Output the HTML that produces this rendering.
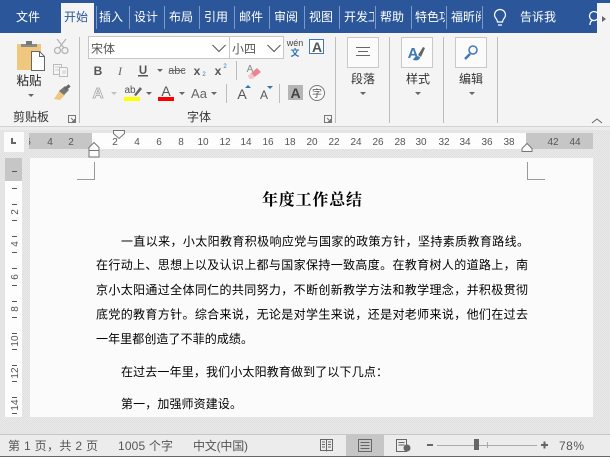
<!DOCTYPE html>
<html lang="zh"><head><meta charset="utf-8"><title>Word</title>
<style>
html,body{margin:0;padding:0;width:610px;height:457px;overflow:hidden;background:#e6e6e6}
svg{display:block}
text{font-family:"Liberation Sans","Noto Sans CJK SC",sans-serif}
.t{font-size:12px;fill:#fff;text-anchor:middle}
.l{font-size:12px;fill:#333;text-anchor:middle}
.r{font-size:10px;fill:#555;text-anchor:middle;font-family:"Liberation Sans",sans-serif}
.b{font-size:12px;fill:#000;font-family:"WenQuanYi Zen Hei","Noto Sans CJK SC",sans-serif}
.s{font-size:12px;fill:#555}
.sep{stroke:#bdbdbd;stroke-width:1}
.ic{font-weight:bold;fill:#555;text-anchor:middle;font-family:"Liberation Sans",sans-serif}
</style></head><body>
<svg width="610" height="457" viewBox="0 0 610 457" xmlns="http://www.w3.org/2000/svg">
<defs>
<pattern id="dit" width="2" height="2" patternUnits="userSpaceOnUse"><rect width="2" height="2" fill="#e8e8e8"/><rect width="1" height="1" fill="#e1e1e1"/><rect x="1" y="1" width="1" height="1" fill="#e1e1e1"/></pattern>
</defs>
<rect width="610" height="457" fill="url(#dit)"/>
<!-- title/tabs -->
<rect width="610" height="33" fill="#2b579a"/>
<rect x="61" y="3" width="33" height="30" fill="#f4f4f4"/>
<text class="t" x="28" y="21">文件</text>
<text class="l" x="76" y="21" style="fill:#2b579a">开始</text>
<text class="t" x="111" y="21">插入</text>
<text class="t" x="146" y="21">设计</text>
<text class="t" x="181" y="21">布局</text>
<text class="t" x="216" y="21">引用</text>
<text class="t" x="251" y="21">邮件</text>
<text class="t" x="286" y="21">审阅</text>
<text class="t" x="321" y="21">视图</text>
<svg x="343" y="0" width="31" height="33"><text class="t" x="19" y="21">开发工</text></svg>
<text class="t" x="392" y="21">帮助</text>
<svg x="415" y="0" width="30" height="33"><text class="t" x="18" y="21">特色功</text></svg>
<svg x="451" y="0" width="30" height="33"><text class="t" x="18" y="21">福昕阅</text></svg>
<g stroke="#7d9bc6" stroke-width="1">
<path d="M96.500 6V29M129.500 6V29M164.500 6V29M199.500 6V29M234.500 6V29M269.500 6V29M304.500 6V29M339.500 6V29M375.500 6V29M411.500 6V29M446.500 6V29M482.500 6V29"/>
</g>
<!-- bulb -->
<g fill="none" stroke="#fff" stroke-width="1.200"><path d="M497.500 22c0-3-3-4-3-7a5.500 5.500 0 0 1 11 0c0 3-3 4-3 7z"/><path d="M498 25h4"/></g>
<text class="t" x="538" y="21">告诉我</text>
<g fill="none" stroke="#fff" stroke-width="1.300"><circle cx="594" cy="16" r="4.500"/><path d="M590 25c0-3 1-4 3-5"/></g>
<rect x="597" y="3" width="13" height="30" fill="#f4f4f4"/>
<path d="M602 16l4 3-4 3z" fill="#666"/>
<!-- ribbon -->
<rect y="33" width="610" height="94" fill="#f4f4f4"/>
<rect y="126" width="610" height="1" fill="#d2d2d2"/>
<rect y="127" width="610" height="3" fill="#ececec"/>
<path class="sep" d="M79.500 37V123M335.500 37V123M389.500 37V123M443.500 37V123M497.500 37V123"/>
<!-- clipboard -->
<path d="M17 44h24v26H17z" fill="#efc77f"/>
<path d="M21 44h16v3H21z" fill="#8a8a8a"/><rect x="26" y="41" width="6" height="4" fill="#777"/>
<path d="M31.500 51.500h8l5 5v14h-13z" fill="#fff" stroke="#666"/>
<path d="M39.500 51.500v5h5" fill="none" stroke="#666"/>
<text x="29" y="85" style="font-size:12.500px;fill:#222;text-anchor:middle">粘贴</text>
<path d="M28 94h6l-3 3z" fill="#666"/>
<text x="31" y="121" style="font-size:12px;fill:#333;text-anchor:middle">剪贴板</text>
<g fill="none" stroke="#777"><rect x="68.500" y="115.500" width="7" height="7"/><path d="M71 118l3.500 3.500M74.500 119v2.500H72"/></g>
<!-- scissors -->
<g fill="none" stroke="#b5b5b5" stroke-width="1.300"><circle cx="57.500" cy="50.500" r="3"/><circle cx="65" cy="50.500" r="3"/><path d="M59 48l7-9M64 48l-7-9"/></g>
<!-- copy -->
<g fill="#f6f6f6" stroke="#bbb"><path d="M53.500 64.500h8v10h-8z"/><path d="M60.500 67.500h6l1 1v8h-8v-9z"/></g>
<path d="M55 67h5M55 70h4M62 71h4M62 73h4" stroke="#ccc"/>
<!-- painter -->
<path d="M60 90l5 5-5 5-6-1z" fill="#efc77f"/>
<path d="M59 91l6-5 4 4-5 5" fill="#777"/><rect x="64" y="86" width="6" height="3" fill="#666" transform="rotate(-40 67 87)"/>
<!-- font boxes -->
<rect x="88.500" y="36.500" width="141" height="22" fill="#fff" stroke="#c6c6c6"/>
<rect x="229.500" y="36.500" width="54" height="22" fill="#fff" stroke="#c6c6c6"/>
<text x="91" y="53" style="font-size:12px;fill:#555">宋体</text>
<text x="232" y="53" style="font-size:12px;fill:#555">小四</text>
<path d="M212.500 45l6.500 6.500 6.500-6.500M267.500 45l6.500 6.500 6.500-6.500" fill="none" stroke="#555"/>
<text x="295" y="46" style="font-size:9px;fill:#444;text-anchor:middle">wén</text>
<text x="295" y="56" style="font-size:9px;fill:#2f75b5;text-anchor:middle;font-weight:bold">文</text>
<rect x="309.500" y="39.500" width="14" height="14" fill="#fff" stroke="#3f78b5"/>
<text class="ic" x="317" y="52" style="font-size:14px">A</text>
<!-- row 2 -->
<text class="ic" x="98" y="75" style="font-size:12px">B</text>
<text x="120" y="75" style="font-size:12px;fill:#666;text-anchor:middle;font-style:italic;font-family:'Liberation Serif',serif">I</text>
<text class="ic" x="143" y="74" style="font-size:11.500px">U</text><rect x="138" y="75" width="10" height="1.500" fill="#555"/>
<path d="M157 69h6l-3 3z" fill="#666"/>
<text x="177" y="74" style="font-size:11px;fill:#666;text-anchor:middle;font-family:'Liberation Sans',sans-serif">abc</text><rect x="169" y="70" width="16" height="1" fill="#666"/>
<text class="ic" x="197" y="75" style="font-size:12px">x</text><text x="204" y="76" style="font-size:6px;fill:#2f75b5;text-anchor:middle;font-family:'Liberation Sans',sans-serif">2</text>
<text class="ic" x="218" y="75" style="font-size:12px">x</text><text x="225" y="68" style="font-size:6px;fill:#2f75b5;text-anchor:middle;font-family:'Liberation Sans',sans-serif">2</text>
<path class="sep" d="M236.500 61V80"/>
<text x="250" y="72" style="font-size:10px;fill:#888;text-anchor:middle;font-family:'Liberation Sans',sans-serif">A</text>
<path d="M248 76l9-8 4 4-9 7h-2z" fill="#e9858f"/><path d="M248 76l3-3 4 4-3 2h-2z" fill="#f4c6ca"/>
<!-- row 3 -->
<text x="98" y="98" style="font-size:15px;fill:#f4f4f4;stroke:#a8a8a8;stroke-width:.8;text-anchor:middle;font-weight:bold;font-family:'Liberation Sans',sans-serif">A</text>
<path d="M111 92h6l-3 3z" fill="#c0c0c0"/>
<text x="130" y="93" style="font-size:10px;fill:#555;text-anchor:middle;font-family:'Liberation Sans',sans-serif">ab</text>
<path d="M134 95l6-8 2 2-6 7z" fill="#666"/>
<rect x="124" y="97" width="16" height="4" fill="#ffff00"/>
<path d="M146 92h6l-3 3z" fill="#666"/>
<text class="ic" x="166" y="96" style="font-size:14px;font-weight:normal">A</text>
<rect x="158" y="97" width="16" height="4" fill="#ff0000"/>
<path d="M179 92h6l-3 3z" fill="#666"/>
<text x="199" y="98" style="font-size:13px;fill:#666;text-anchor:middle;font-family:'Liberation Sans',sans-serif">Aa</text>
<path d="M211 92h6l-3 3z" fill="#666"/>
<path class="sep" d="M226.500 84V103"/>
<text x="242" y="99" style="font-size:14px;fill:#555;text-anchor:middle;font-family:'Liberation Sans',sans-serif">A</text><path d="M245 88h6l-3-3z" fill="#2f75b5"/>
<text x="264" y="99" style="font-size:12px;fill:#555;text-anchor:middle;font-family:'Liberation Sans',sans-serif">A</text><path d="M267 86h6l-3 3z" fill="#2f75b5"/>
<path class="sep" d="M279.500 84V103"/>
<rect x="288" y="85" width="15" height="15" fill="#b5b5b5"/>
<text class="ic" x="295.500" y="98" style="font-size:14px;fill:#444">A</text>
<circle cx="317" cy="93" r="7.500" fill="#fbfbfb" stroke="#777"/>
<text x="317" y="97" style="font-size:10px;fill:#555;text-anchor:middle">字</text>
<text x="199" y="121" style="font-size:12px;fill:#333;text-anchor:middle">字体</text>
<g fill="none" stroke="#777"><rect x="324.500" y="115.500" width="7" height="7"/><path d="M327 118l3.500 3.500M330.500 119v2.500H328"/></g>
<!-- big buttons -->
<g fill="#fbfbfb" stroke="#c9c9c9"><rect x="347.500" y="37.500" width="31" height="30"/><rect x="401.500" y="37.500" width="31" height="30"/><rect x="455.500" y="37.500" width="31" height="30"/></g>
<path d="M356 47.500h14M358 51.500h10M356 55.500h14" stroke="#666" fill="none"/>
<text x="413" y="58" style="font-size:15px;fill:#3f78b5;text-anchor:middle;font-weight:bold;font-family:'Liberation Sans',sans-serif">A</text>
<path d="M418 55l5-8 2 1-4 9z" fill="#666"/><path d="M413 60c1-3 4-5 7-3 0 3-3 4-7 3z" fill="#3f78b5"/>
<g fill="none" stroke="#3f78b5"><circle cx="473" cy="50" r="4" stroke-width="1.500"/><path d="M470 54l-5 5" stroke-width="2.500"/></g>
<text x="363" y="83" style="font-size:12px;fill:#333;text-anchor:middle">段落</text>
<text x="418" y="83" style="font-size:12px;fill:#333;text-anchor:middle">样式</text>
<text x="471" y="83" style="font-size:12px;fill:#333;text-anchor:middle">编辑</text>
<path d="M360 92h6l-3 3zM415 92h6l-3 3zM469 92h6l-3 3z" fill="#666"/>
<path d="M592 123l5-4 5 4" fill="none" stroke="#666"/>
<!-- h ruler -->
<rect x="4" y="132" width="20" height="20" fill="#fbfbfb"/>
<path d="M11 138v6h5v-2h-3v-4z" fill="#666"/>
<rect x="29" y="133" width="564" height="16" fill="#fdfdfd"/>
<rect x="29" y="133" width="63" height="16" fill="#c6c6c6"/>
<rect x="526" y="133" width="67" height="16" fill="#c6c6c6"/>
<svg x="29" y="133" width="64" height="16"><text class="r" x="-1" y="12">6</text></svg>
<g>
<text class="r" x="50" y="145">4</text><text class="r" x="71" y="145">2</text>
<text class="r" x="115" y="145">2</text><text class="r" x="137" y="145">4</text><text class="r" x="159" y="145">6</text><text class="r" x="181" y="145">8</text>
<text class="r" x="203" y="145">10</text><text class="r" x="225" y="145">12</text><text class="r" x="246" y="145">14</text><text class="r" x="268" y="145">16</text><text class="r" x="290" y="145">18</text>
<text class="r" x="312" y="145">20</text><text class="r" x="334" y="145">22</text><text class="r" x="356" y="145">24</text><text class="r" x="378" y="145">26</text><text class="r" x="400" y="145">28</text>
<text class="r" x="421" y="145">30</text><text class="r" x="444" y="145">32</text><text class="r" x="465" y="145">34</text><text class="r" x="487" y="145">36</text><text class="r" x="509" y="145">38</text>
<text class="r" x="553" y="145">42</text><text class="r" x="575" y="145">44</text>
</g>
<!-- indent markers -->
<path d="M113.500 130.500h11v3l-5.500 5-5.500-5z" fill="#fbfbfb" stroke="#777"/>
<path d="M94 142.500l5 5v3H89v-3z" fill="#fbfbfb" stroke="#777"/>
<rect x="89" y="150.500" width="10" height="6.500" fill="#fbfbfb" stroke="#777"/>
<path d="M527 143.500l5 5v3h-10v-3z" fill="#fbfbfb" stroke="#777"/>
<!-- v ruler -->
<rect x="5" y="158" width="17" height="259" fill="#fdfdfd"/>
<rect x="5" y="158" width="17" height="23" fill="#c6c6c6"/>
<g fill="#555">
<rect x="12" y="171" width="5" height="1"/><rect x="12" y="188" width="5" height="1"/><rect x="12" y="204" width="5" height="1"/><rect x="12" y="220" width="5" height="1"/><rect x="12" y="236" width="5" height="1"/><rect x="12" y="252" width="5" height="1"/><rect x="12" y="268" width="5" height="1"/><rect x="12" y="285" width="5" height="1"/><rect x="12" y="301" width="5" height="1"/><rect x="12" y="317" width="5" height="1"/><rect x="12" y="333" width="5" height="1"/><rect x="12" y="349" width="5" height="1"/><rect x="12" y="365" width="5" height="1"/><rect x="12" y="381" width="5" height="1"/><rect x="12" y="397" width="5" height="1"/><rect x="12" y="413" width="5" height="1"/>
</g>
<g>
<text class="r" transform="translate(18 212) rotate(-90)">2</text>
<text class="r" transform="translate(18 244) rotate(-90)">4</text>
<text class="r" transform="translate(18 277) rotate(-90)">6</text>
<text class="r" transform="translate(18 309) rotate(-90)">8</text>
<text class="r" transform="translate(18 341) rotate(-90)">10</text>
<text class="r" transform="translate(18 373) rotate(-90)">12</text>
<text class="r" transform="translate(18 405) rotate(-90)">14</text>
</g>
<!-- page -->
<rect x="30" y="158" width="563" height="259" fill="#fbfbfb"/>
<path d="M77 179.500h17.500V162M527.500 162v17.500H545" fill="none" stroke="#9a9a9a"/>
<text x="262" y="205" textLength="100" lengthAdjust="spacing" style="font-size:16px;font-weight:bold;fill:#000;font-family:'Noto Serif CJK SC',serif">年度工作总结</text>
<text class="b" x="121" y="245.500" textLength="408">一直以来，小太阳教育积极响应党与国家的政策方针，坚持素质教育路线。</text>
<text class="b" x="96" y="269" textLength="432">在行动上、思想上以及认识上都与国家保持一致高度。在教育树人的道路上，南</text>
<text class="b" x="96" y="294" textLength="432">京小太阳通过全体同仁的共同努力，不断创新教学方法和教学理念，并积极贯彻</text>
<text class="b" x="96" y="318.500" textLength="432">底党的教育方针。综合来说，无论是对学生来说，还是对老师来说，他们在过去</text>
<text class="b" x="96" y="343" textLength="157">一年里都创造了不菲的成绩。</text>
<text class="b" x="121" y="376" textLength="267">在过去一年里，我们小太阳教育做到了以下几点：</text>
<text class="b" x="121" y="408" textLength="121">第一，加强师资建设。</text>
<!-- status -->
<rect y="434" width="610" height="22" fill="#ececec"/>
<rect y="434" width="610" height="1" fill="#c6c6c6"/>
<rect y="456" width="610" height="1" fill="#666"/>
<text class="s" x="8" y="450" textLength="90">第 1 页，共 2 页</text>
<text class="s" x="118" y="450" textLength="55">1005 个字</text>
<text class="s" x="193" y="450" textLength="55">中文(中国)</text>
<rect x="346" y="435" width="38" height="21" fill="#c6c6c6"/>
<g fill="none" stroke="#666"><path d="M320.500 439.500h12v11h-12zM326.500 439.500v12M322 442h3M322 444.500h3M322 447h3M328 442h3M328 444.500h3M328 447h3"/>
<path d="M358.500 439.500h13v12h-13zM360.500 442.500h9M360.500 445.500h9M360.500 448.500h9"/>
<path d="M396.500 439.500h10v12h-10zM398.500 442.500h6M398.500 445h6"/></g>
<circle cx="407" cy="448" r="3.500" fill="#666"/>
<rect x="427" y="444" width="6" height="2" fill="#666"/>
<rect x="437" y="445" width="100" height="1" fill="#aaa"/>
<rect x="487" y="442" width="1" height="6" fill="#aaa"/>
<rect x="474" y="439" width="5" height="11" fill="#666"/>
<path d="M541 445h7M544.500 441.500v7" stroke="#666" stroke-width="2"/>
<text class="s" x="559" y="450" textLength="25" style="font-family:'Liberation Sans',sans-serif">78%</text>
</svg>
</body></html>
